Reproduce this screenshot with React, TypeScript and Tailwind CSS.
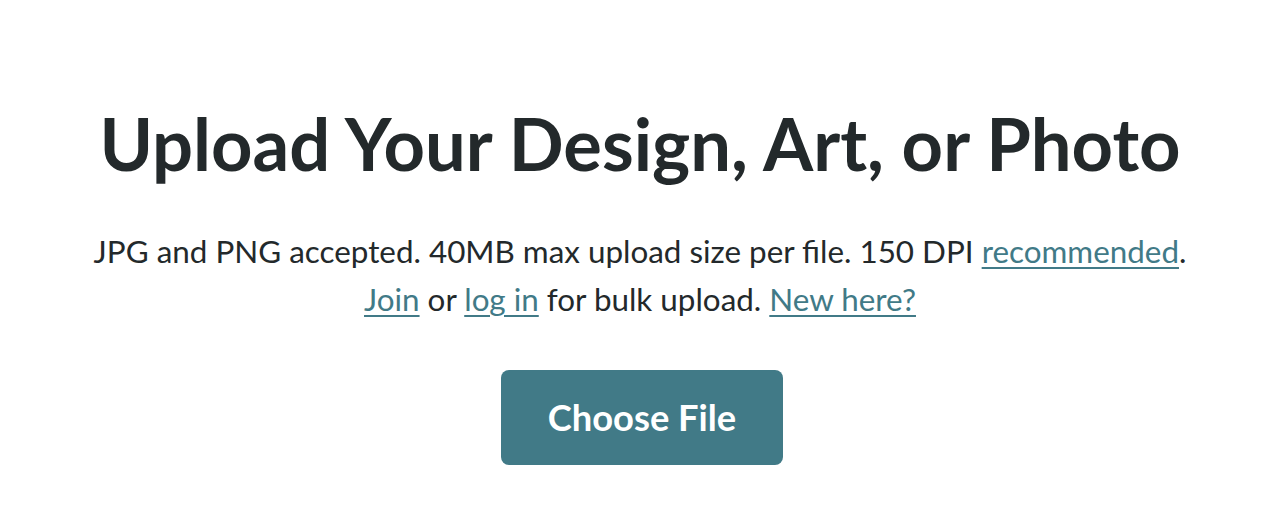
export default function App() {
  const link = "text-[#417a87] underline decoration-2 underline-offset-[4px]";
  return (
    <div className="w-[1280px] h-[518px] bg-white flex flex-col items-center text-[#23292b]" style={{ fontFamily: "Lato, 'Noto Sans', sans-serif" }}>
      <h1 className="mt-[98px] text-[72.3px] leading-[90px] font-bold text-center">Upload Your Design, Art, or Photo</h1>
      <div className="mt-[39px] text-[31.4px] leading-[48px] text-center">
        <p>
          JPG and PNG accepted. 40MB max upload size per file. 150 DPI{" "}
          <a className={link}>recommended</a>.
        </p>
        <p>
          <a className={link}>Join</a> or{" "}
          <a className={link}>log in</a> for bulk upload.{" "}
          <a className={link}>New here?</a>
        </p>
      </div>
      <button className="mt-[47px] ml-[4px] w-[282px] h-[95px] rounded-[8px] bg-[#417a87] text-white text-[36.3px] font-bold">Choose File</button>
    </div>
  );
}
